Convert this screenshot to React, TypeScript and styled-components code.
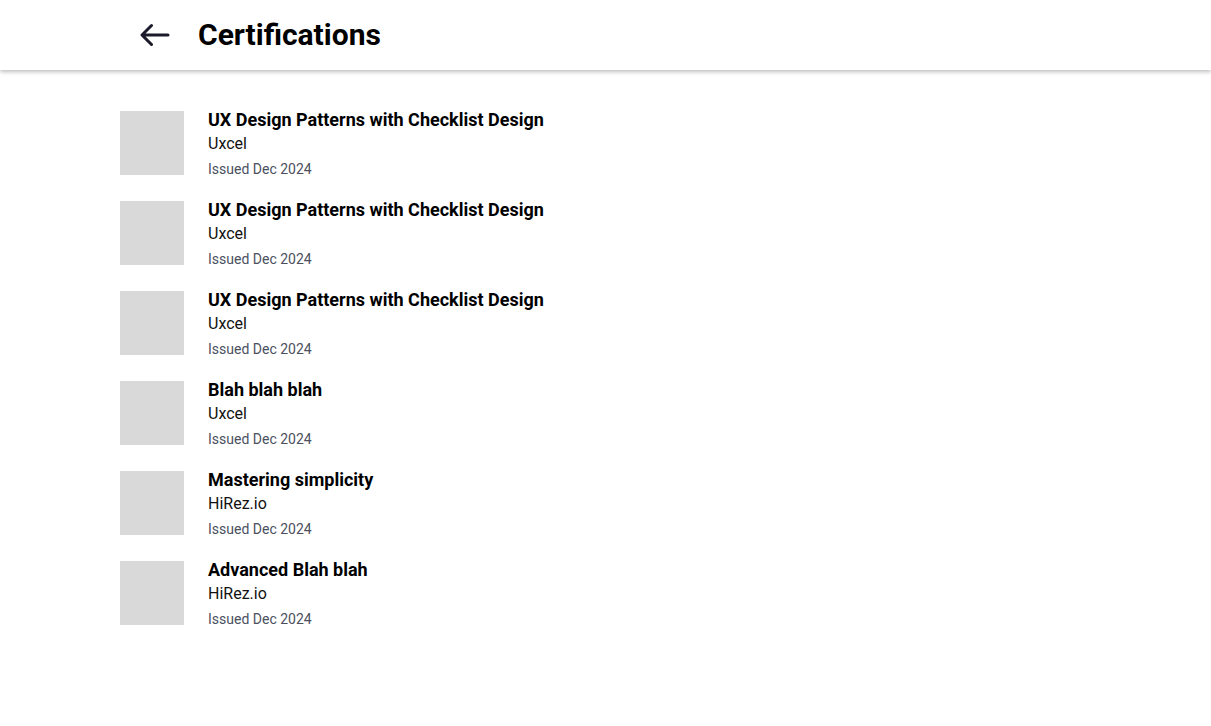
import React from "react";
import styled, { createGlobalStyle } from "styled-components";

const GlobalStyle = createGlobalStyle`
  html, body { margin: 0; padding: 0; background: #ffffff; }
  body { font-family: Roboto, "Noto Sans", sans-serif; color: #000; }
`;

const Page = styled.div`
  min-height: 726px;
  background: #ffffff;
`;

const Header = styled.header`
  height: 70px;
  display: flex;
  align-items: center;
  gap: 28px;
  padding-left: 140px;
  background: #ffffff;
  box-shadow: 0 2px 4px rgba(0, 0, 0, 0.25);
  position: relative;
  z-index: 1;
`;

const BackButton = styled.button`
  width: 30px;
  height: 30px;
  padding: 0;
  border: none;
  background: transparent;
  display: flex;
  align-items: center;
  justify-content: center;
  cursor: pointer;
  color: #1b1a2b;
`;

const Title = styled.h1`
  margin: 0;
  font-size: 30px;
  font-weight: 700;
  line-height: 36px;
  color: #000;
`;

const List = styled.ul`
  list-style: none;
  margin: 0;
  padding: 38px 0 0 120px;
  display: flex;
  flex-direction: column;
  gap: 16px;
`;

const Item = styled.li`
  display: flex;
  align-items: flex-start;
  gap: 24px;
`;

const Thumb = styled.div`
  width: 64px;
  height: 64px;
  margin-top: 3px;
  background: #d9d9d9;
  flex-shrink: 0;
`;

const Info = styled.div`
  display: flex;
  flex-direction: column;
`;

const CertName = styled.div`
  font-size: 18px;
  font-weight: 700;
  line-height: 24px;
  color: #000;
`;

const Issuer = styled.div`
  font-size: 16px;
  line-height: 24px;
  color: #111;
`;

const Issued = styled.div`
  font-size: 14px;
  line-height: 26px;
  color: #4b5060;
`;

const certs = [
  { name: "UX Design Patterns with Checklist Design", issuer: "Uxcel" },
  { name: "UX Design Patterns with Checklist Design", issuer: "Uxcel" },
  { name: "UX Design Patterns with Checklist Design", issuer: "Uxcel" },
  { name: "Blah blah blah", issuer: "Uxcel" },
  { name: "Mastering simplicity", issuer: "HiRez.io" },
  { name: "Advanced Blah blah", issuer: "HiRez.io" },
];

export default function App() {
  return (
    <Page>
      <GlobalStyle />
      <Header>
        <BackButton aria-label="Back">
          <svg width="30" height="24" viewBox="0 0 30 24" fill="none">
            <path
              d="M28 12H2.5M11.5 2.5L2 12l9.5 9.5"
              stroke="currentColor"
              strokeWidth="3"
              strokeLinecap="round"
              strokeLinejoin="round"
            />
          </svg>
        </BackButton>
        <Title>Certifications</Title>
      </Header>
      <List>
        {certs.map((c, i) => (
          <Item key={i}>
            <Thumb />
            <Info>
              <CertName>{c.name}</CertName>
              <Issuer>{c.issuer}</Issuer>
              <Issued>Issued Dec 2024</Issued>
            </Info>
          </Item>
        ))}
      </List>
    </Page>
  );
}
